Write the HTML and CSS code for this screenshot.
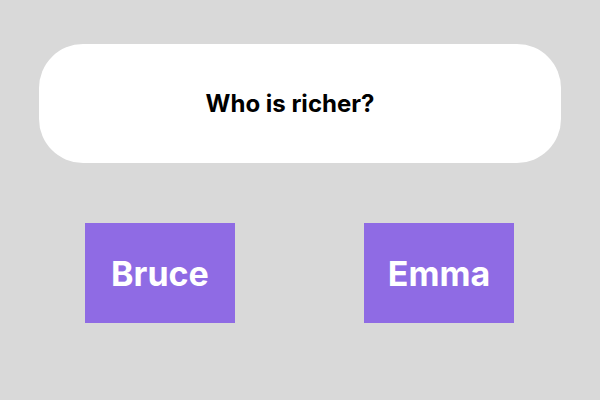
FILE: index.html
```html
<!DOCTYPE html>
<html lang="en">
<head>
    <meta charset="UTF-8">
    <meta name="viewport" content="width=device-width, initial-scale=1.0">
    <title>Who is richer?</title>
    <link rel="stylesheet" href="styles.css">
</head>
<body>

    <div class="question">
        <h1>Who is richer?</h1>
    </div>

    <div class="choices">
        <button class="choice">Bruce</button>
        <button class="choice">Emma</button>
    </div>

</body>
</html>
```

FILE: styles.css
```css
body {
    font-family: Inter, "Liberation Sans", sans-serif;
    margin: 0;
    padding: 44px 39px 0;
    background-color: #d9d9d9;
}
.question {
    height: 119px;
    padding-right: 20px;
    background: white;
    border-radius: 44px;
    display: flex;
    align-items: center;
    justify-content: center;
}
.question h1 {
    margin: 0;
    font-size: 24px;
    font-weight: 700;
    color: #000;
}
.choices {
    display: flex;
    gap: 129px;
    margin-top: 60px;
    padding-left: 46px;
}
.choice {
    width: 150px;
    height: 100px;
    padding: 0;
    border: none;
    background-color: #8f6be4;
    color: white;
    font-family: inherit;
    font-size: 34px;
    font-weight: 700;
    cursor: pointer;
}
```
